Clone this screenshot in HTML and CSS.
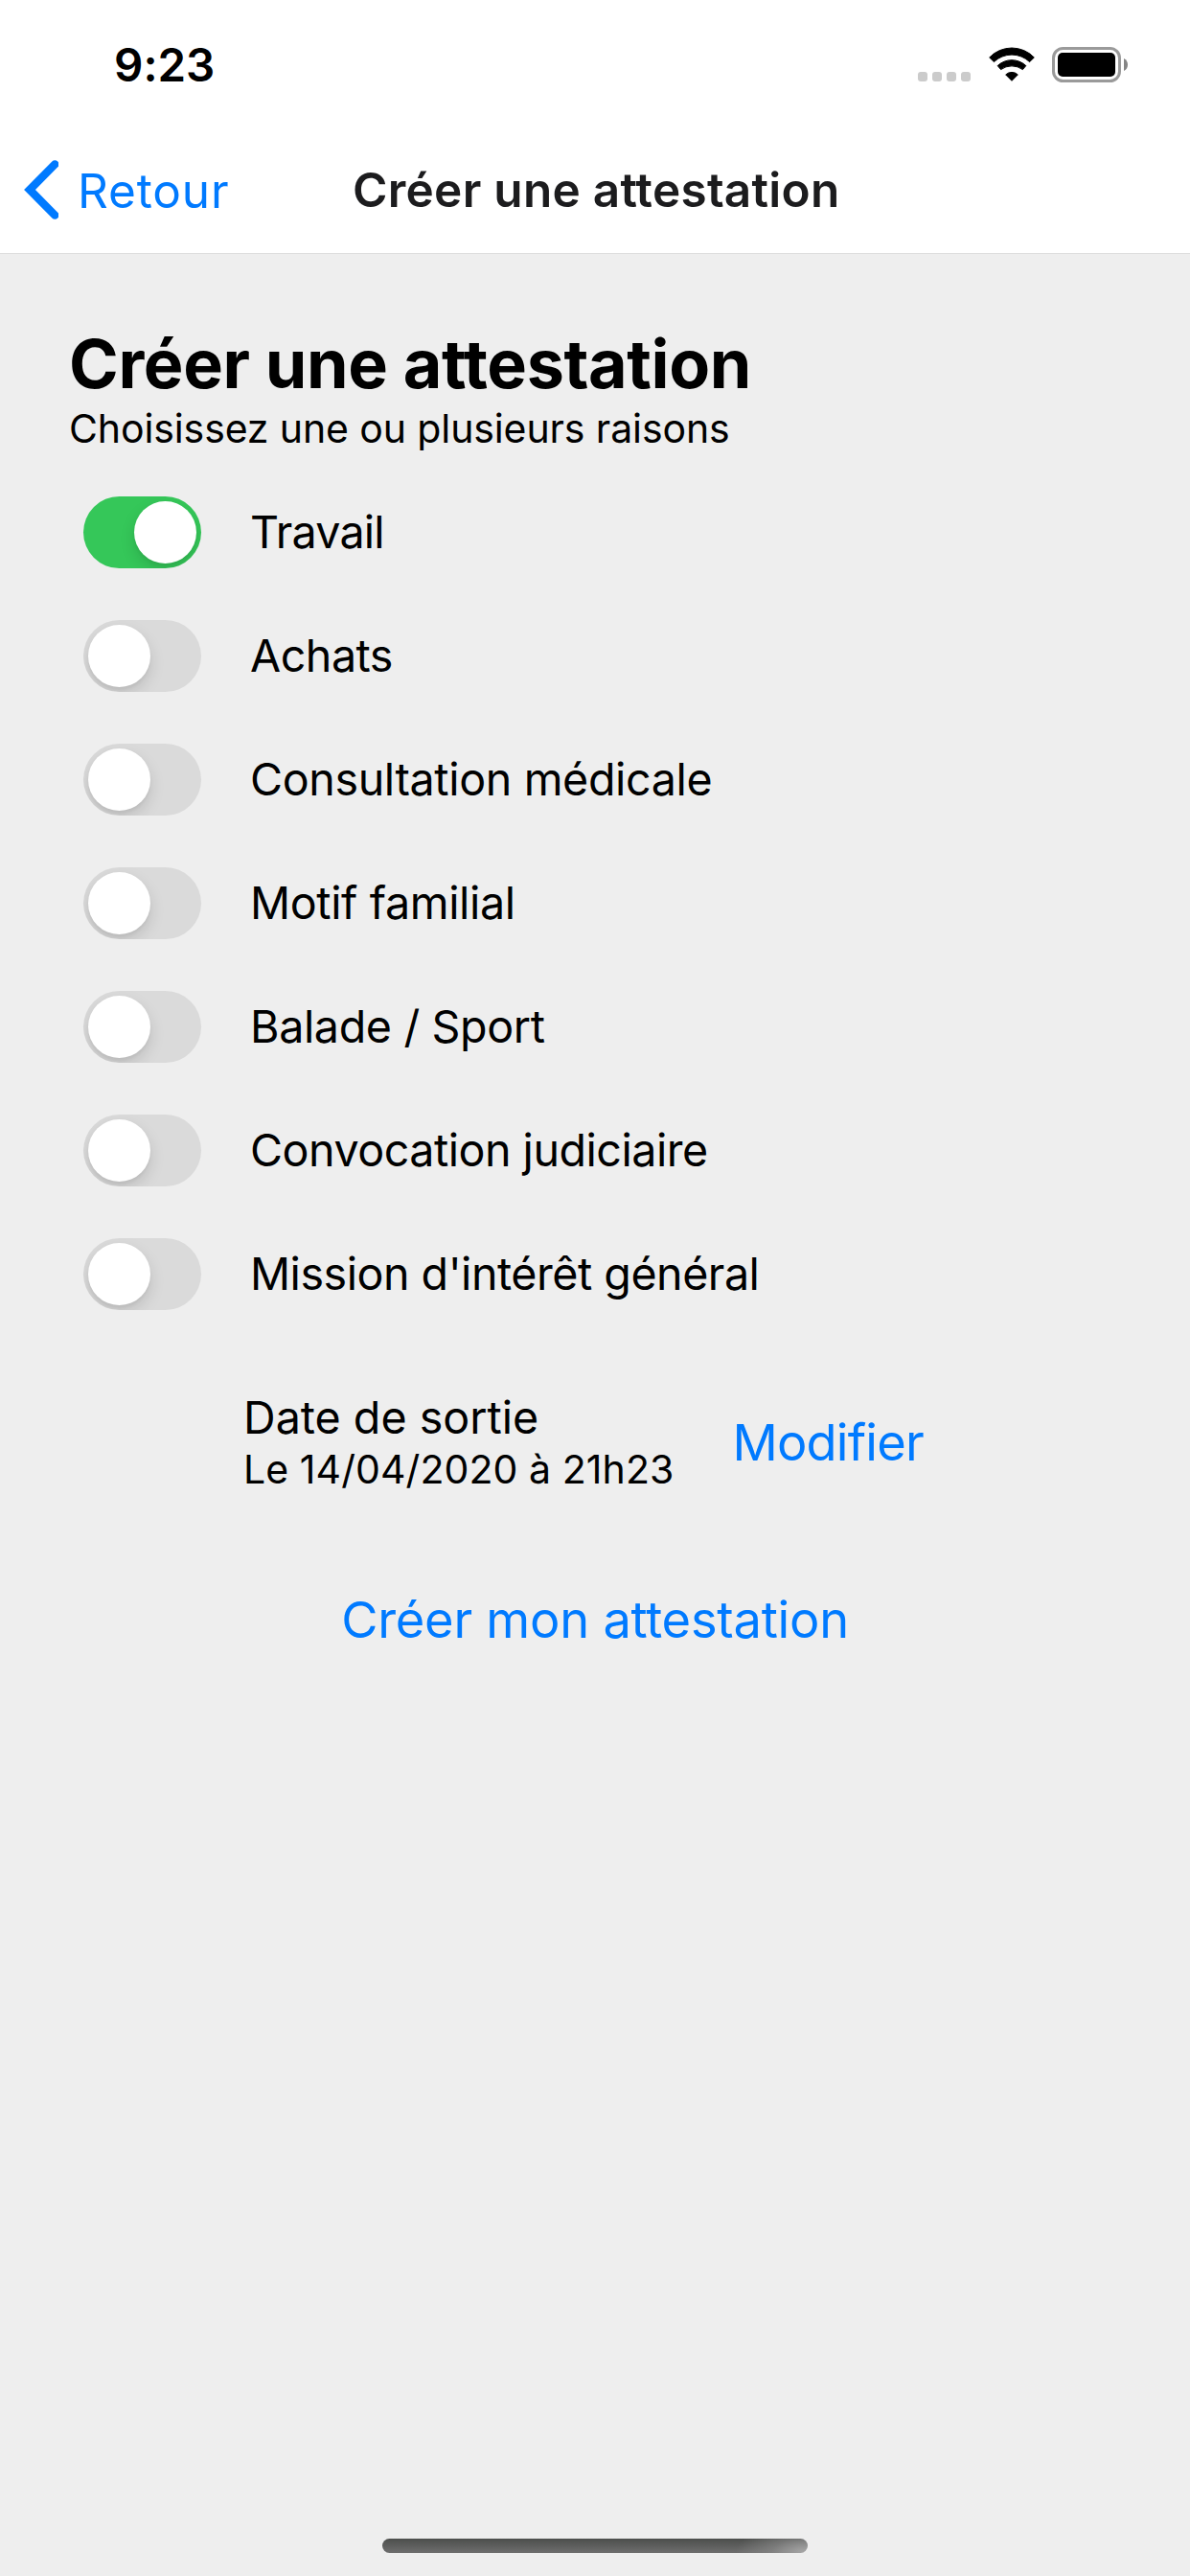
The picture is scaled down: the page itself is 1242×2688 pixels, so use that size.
FILE: index.html
```html
<!DOCTYPE html>
<html lang="fr">
<head>
<meta charset="utf-8">
<title>Créer une attestation</title>
<link rel="stylesheet" href="styles.css">
</head>
<body>
<div class="screen">
  <header class="header">
    <div class="status">
      <span class="clock">9:23</span>
      <div class="indicators">
        <div class="signal"><i></i><i></i><i></i><i></i></div>
        <svg class="wifi" width="48" height="38" viewBox="0 0 48 38">
          <path d="M.7 11A32.2 32.2 0 0 1 47.3 11L42.6 15.6A26.8 26.8 0 0 0 5.4 15.6Z"/>
          <path d="M9.2 19.6A21.5 21.5 0 0 1 38.8 19.6L35.4 23.6A19.3 19.3 0 0 0 12.6 23.6Z"/>
          <path d="M17.7 28.9A9.2 9.2 0 0 1 30.3 28.9L24 35.3Z"/>
        </svg>
        <svg class="battery" width="80" height="37" viewBox="0 0 80 37">
          <rect x="1.5" y="1.5" width="69" height="34" rx="10" fill="none" stroke="#9a9a9a" stroke-width="3"/>
          <rect x="6" y="6" width="60" height="25" rx="5"/>
          <path d="M75 12C78 13.5 79 16 79 18.500S78 23.500 75 25Z" fill="#858585"/>
        </svg>
      </div>
    </div>
    <nav class="nav">
      <a class="back">
        <svg width="61" height="66" viewBox="0 0 61 66"><path d="M57.300 6.400L31 33L57.300 59.600" fill="none" stroke="#007aff" stroke-width="8.400" stroke-linecap="round"/></svg>
        <span>Retour</span>
      </a>
      <span class="nav-title">Créer une attestation</span>
    </nav>
  </header>
  <main class="content">
    <h1>Créer une attestation</h1>
    <p class="subtitle">Choisissez une ou plusieurs raisons</p>
    <ul class="reasons">
      <li><span class="switch on"></span><span class="label tight">Travail</span></li>
      <li><span class="switch"></span><span class="label snug">Achats</span></li>
      <li><span class="switch"></span><span class="label">Consultation médicale</span></li>
      <li><span class="switch"></span><span class="label">Motif familial</span></li>
      <li><span class="switch"></span><span class="label">Balade / Sport</span></li>
      <li><span class="switch"></span><span class="label snug">Convocation judiciaire</span></li>
      <li><span class="switch"></span><span class="label snug">Mission d'intérêt général</span></li>
    </ul>
    <section class="outing">
      <div>
        <p class="outing-title">Date de sortie</p>
        <p class="outing-date">Le 14/04/2020 à 21h23</p>
      </div>
      <a class="edit">Modifier</a>
    </section>
    <a class="create">Créer mon attestation</a>
  </main>
  <div class="home-indicator"></div>
</div>
</body>
</html>
```
FILE: styles.css
```css
* { box-sizing: border-box; margin: 0; padding: 0; }

body {
  font-family: Inter, "Liberation Sans", sans-serif;
  font-feature-settings: "calt" 0, "liga" 0;
  font-variant-ligatures: none;
  color: #000;
  background: #eee;
}

.screen {
  display: flex;
  flex-direction: column;
  width: 1242px;
  height: 2688px;
  background: #eee;
}

.header {
  height: 265px;
  background: #fff;
  border-bottom: 1px solid #dedede;
}

.status {
  display: flex;
  justify-content: space-between;
  height: 132px;
  padding: 38px 64px 0 119px;
}

.clock { font-size: 47.5px; font-weight: 600; line-height: 60px; }

.indicators { display: flex; align-items: flex-start; padding-top: 11px; }

.signal { display: flex; gap: 5px; padding-top: 26px; margin-right: 18.500px; }
.signal i { width: 10px; height: 10px; border-radius: 3px; background: #cbcbcb; }

.wifi { margin-right: 18.500px; stroke: #000; stroke-width: 1; stroke-linejoin: round; }

.nav {
  display: grid;
  grid-template-columns: 368px auto 1fr;
  align-items: center;
  height: 132px;
}

.back {
  display: flex;
  align-items: center;
  color: #007aff;
  font-size: 49.5px;
  letter-spacing: 0.87px;
}
.back span { padding: 2px 0 0 20px; }

.nav-title {
  font-size: 49.5px;
  font-weight: 600;
  letter-spacing: 0.27px;
  color: #1c1c1e;
}

.content {
  display: flex;
  flex: 1;
  flex-direction: column;
  padding: 72px 72px 0;
}

h1 { font-size: 70px; font-weight: 700; line-height: 86px; letter-spacing: -0.38px; }

.subtitle { font-size: 41px; line-height: 50px; letter-spacing: -0.11px; margin-top: -1px; }

.reasons { list-style: none; margin: 19px 0 56px 15px; }
.reasons li { display: flex; align-items: center; gap: 51px; height: 129px; }

.switch {
  width: 123px;
  height: 75px;
  padding: 5px;
  border-radius: 38px;
  background: #dadada;
  overflow: hidden;
}
.switch::before {
  content: "";
  display: block;
  width: 65px;
  height: 65px;
  border-radius: 50%;
  background: #fff;
  box-shadow: 0 7px 16px rgba(0, 0, 0, 0.13), 0 3px 3px rgba(0, 0, 0, 0.04);
}
.switch.on { background: #35c759; }
.switch.on::before { margin-left: 48px; }

.label { padding-bottom: 2px; font-size: 46.6px; line-height: 58px; letter-spacing: -0.36px; }
.label.snug { letter-spacing: -0.48px; }
.label.tight { letter-spacing: -0.76px; }

.outing { display: flex; gap: 61px; padding-left: 182px; }
.outing-title { font-size: 46.6px; line-height: 58px; }
.outing-date { font-size: 41px; line-height: 50px; letter-spacing: 0.08px; }

.edit, .create { color: #007aff; font-size: 52.4px; line-height: 64px; }
.edit { margin-top: 23px; letter-spacing: -0.8px; }
.create { align-self: center; margin-top: 100px; letter-spacing: -0.24px; }

.home-indicator {
  align-self: center;
  width: 444px;
  height: 15px;
  margin-bottom: 24px;
  border-radius: 7.5px;
  background:
    radial-gradient(ellipse 75px 32px at 100% 100%, #aaa, rgba(150, 150, 150, 0.5) 50%, transparent),
    linear-gradient(#4c4e4c, #6e6e6e);
}
```
